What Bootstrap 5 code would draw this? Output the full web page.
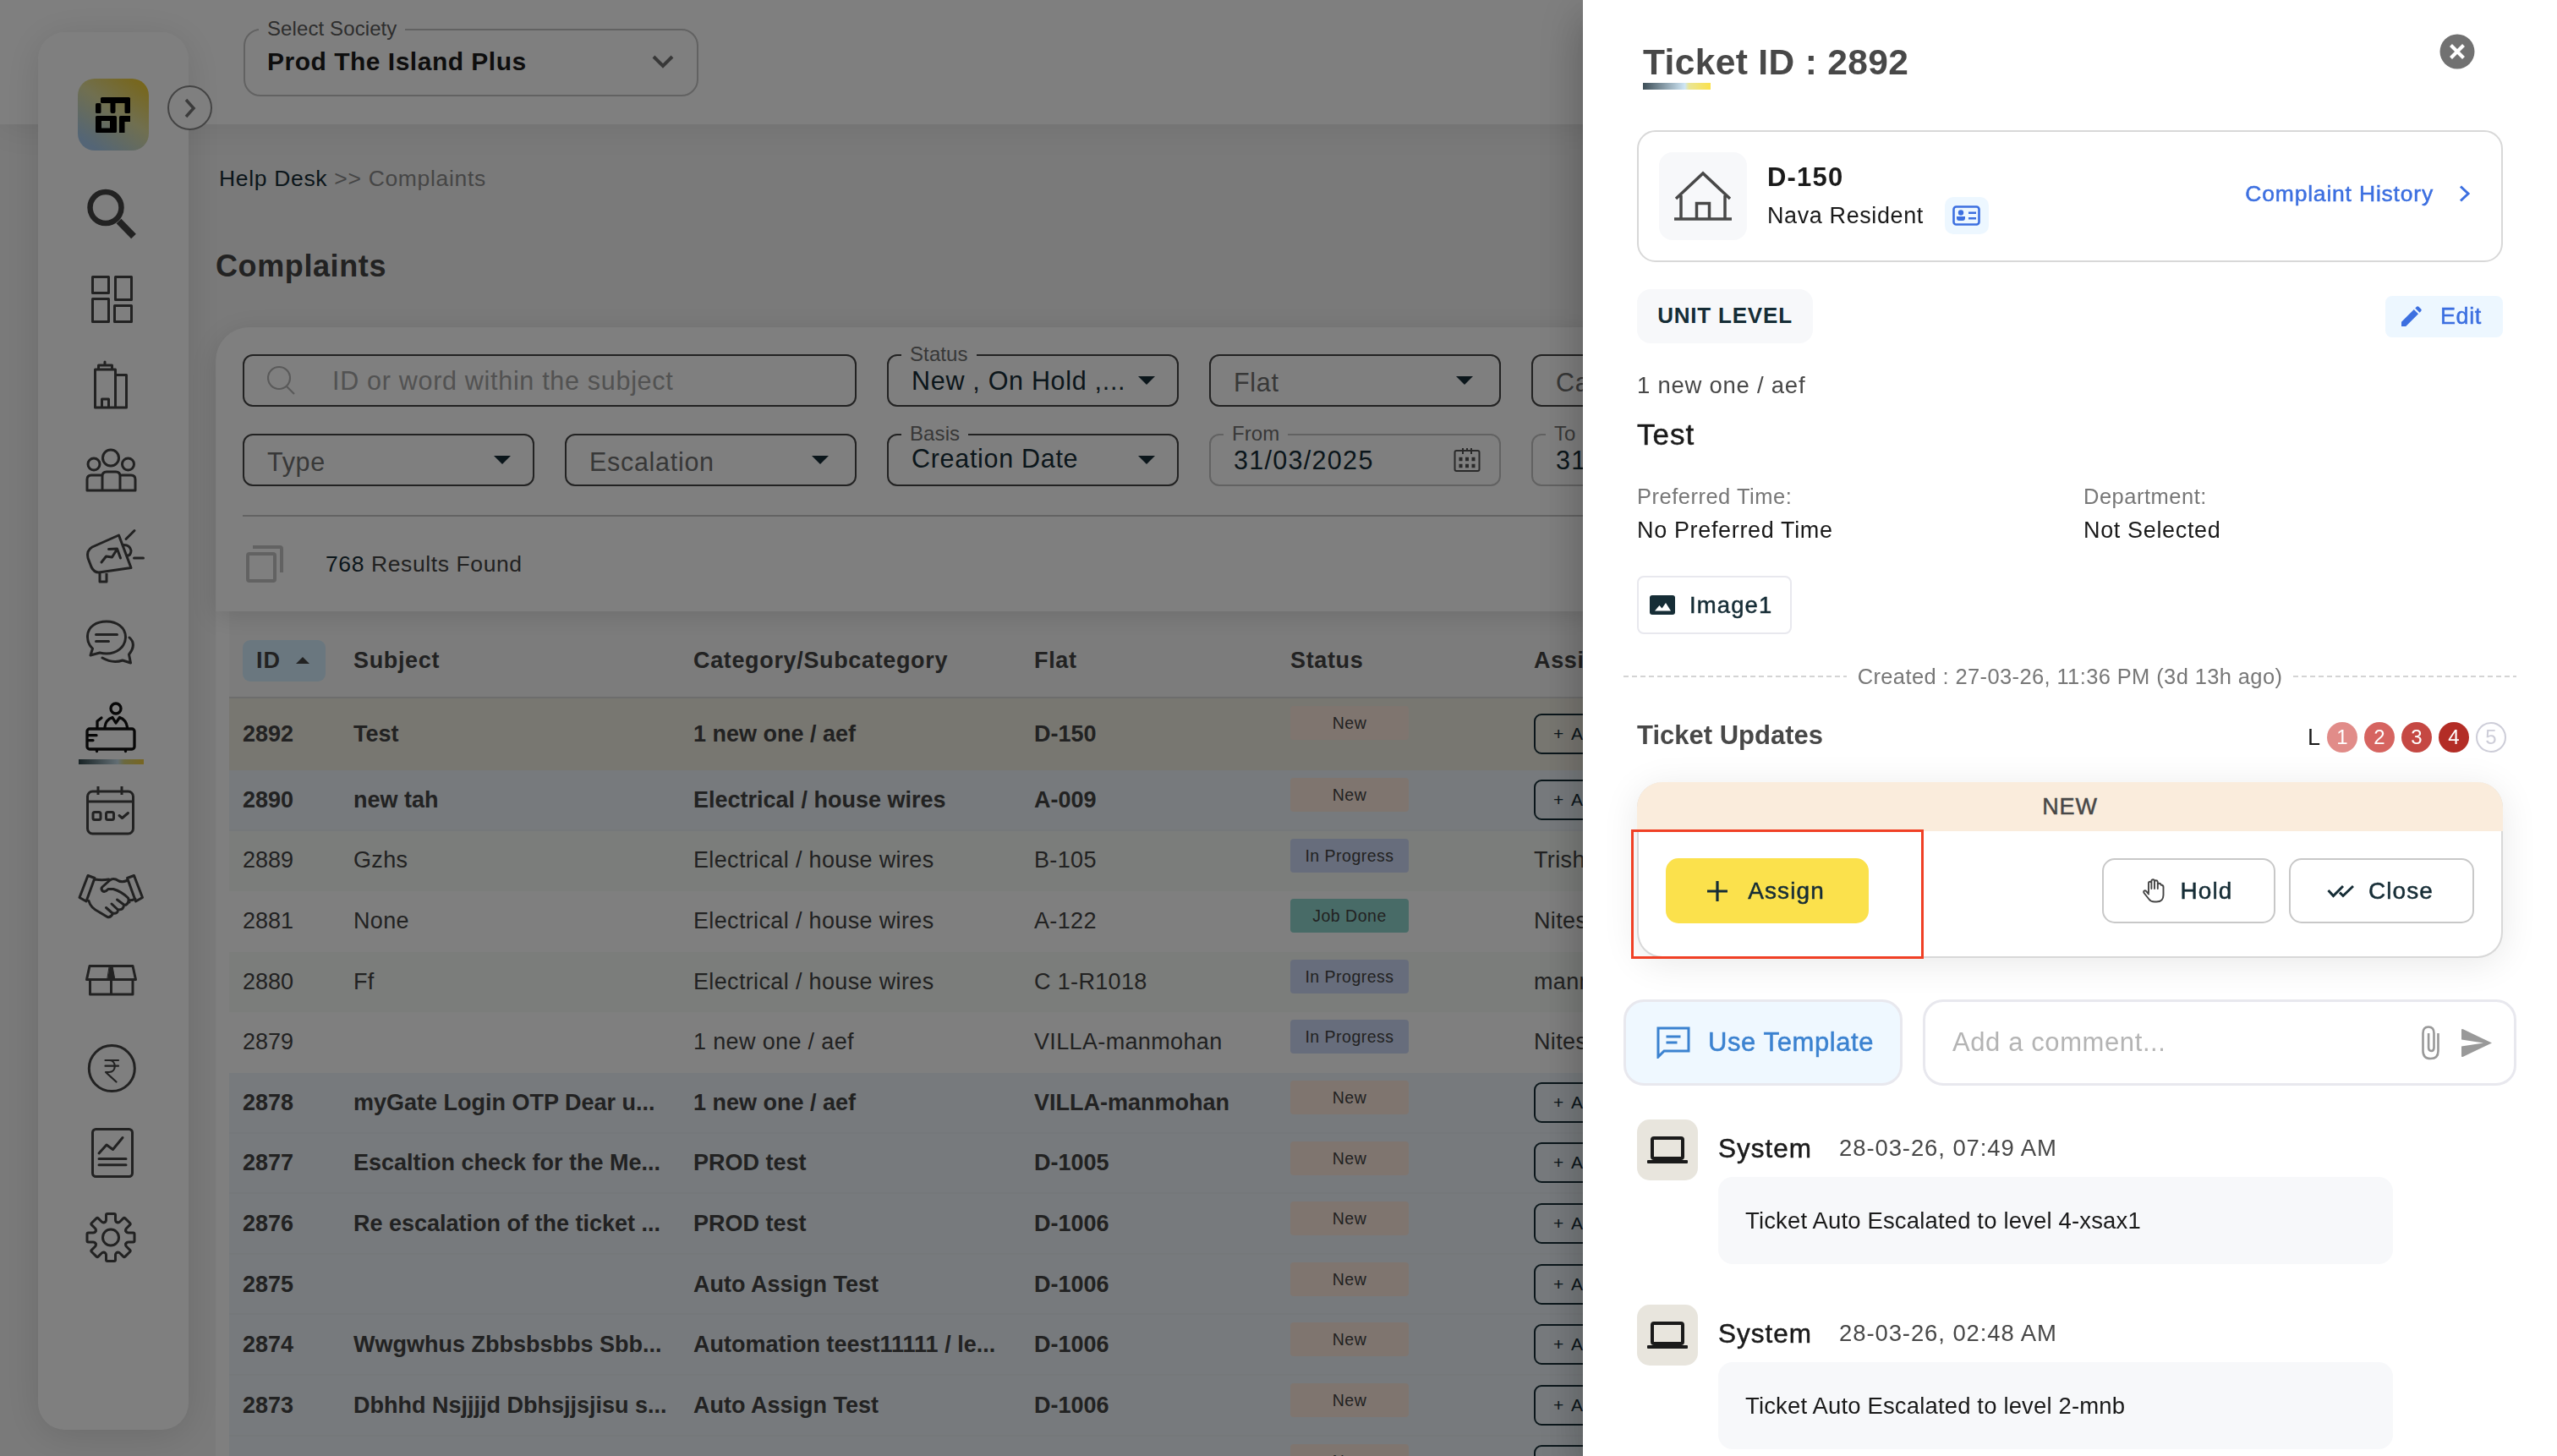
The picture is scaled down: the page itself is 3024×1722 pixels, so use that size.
<!DOCTYPE html>
<html lang="en">
<head>
<meta charset="utf-8">
<title>Help Desk - Complaints</title>
<link href="https://cdn.jsdelivr.net/npm/bootstrap@5.3.0/dist/css/bootstrap.min.css" rel="stylesheet">
<style>
body{font-family:"Liberation Sans",Arial,sans-serif;background:#f4f4f4;color:#444;width:3024px;height:1722px;overflow:hidden;font-size:27px;line-height:36px}
svg{display:block;flex:none}
.ink{color:#162d36}
.topbar{height:147px;background:#fff;box-shadow:0 6px 36px rgba(0,0,0,.07);padding:34px 0 0 288px}
.society{width:538px;height:80px;border:2px solid #c4c4c4;border-radius:20px;padding:0 27px 3px 26px;font-size:30px;letter-spacing:.5px;color:#1c1c1c}
.notch{position:absolute;top:-17px;left:16px;padding:0 10px;background:#fff;font-size:24px;line-height:30px;white-space:nowrap;color:#5c5c5c;font-weight:400;letter-spacing:.1px}
.rail{position:fixed;z-index:20;left:45px;top:38px;width:178px;height:1653px;border-radius:32px;background:#fff;box-shadow:0 6px 46px rgba(0,0,0,.12);padding-top:55px}
.rail .brand{width:84px;height:85px;border-radius:20px;background:linear-gradient(35deg,#a8cbec 12%,#e1dfa0 55%,#f0cc32 95%);margin:0 0 24px 47px}
.rail nav{margin-left:46px;width:80px}
.rail nav svg{width:80px;height:101px;fill:none;stroke:#444;stroke-width:3;stroke-linejoin:round;stroke-linecap:round}
.rail .toggle{position:absolute;left:153px;top:63px;width:53px;height:53px;border:2px solid #888;border-radius:50%;background:#fff}
.page-body{padding-left:255px;width:1884px;overflow:hidden}
.crumb{font-size:26.5px;letter-spacing:.67px;padding:45px 0 0 4px;line-height:38px;color:#8c8c8c}
.page-title{font-size:36px;letter-spacing:.6px;line-height:46px;margin:62px 0 0;font-weight:700;color:#444}
.filters{margin-top:49px;height:336px;background:#fff;border-radius:40px 0 0 0;padding:32px 0 0 32px;box-shadow:0 6px 30px rgba(0,0,0,.12);z-index:2}
.f-row{gap:36px;margin-bottom:32px}
.fld{width:345px;height:62px;border:2px solid #444;border-radius:12px;padding:0 26px 0 27px;font-size:30.5px;letter-spacing:.7px;white-space:nowrap;flex:none;color:#707070}
.fld.wide{width:726px}
.fld.open{padding-right:31px}
.fld.soft{border-color:#c4c4c4;padding-right:22px;letter-spacing:1.3px}
.fld .notch{top:-17px;left:15px;font-size:24px;color:#707070}
.caret{width:0;height:0;border:10px solid transparent;border-top:10px solid #162d36;border-bottom:0}
.sheet{background:#fff;padding-left:16px}
.tbl{table-layout:fixed;width:2700px;margin:0;border-collapse:collapse;--bs-table-bg:transparent;--bs-table-color:#444}
.tbl>:not(caption)>*>*{padding:0 0 2px 16px;border:0;white-space:nowrap;overflow:hidden;color:#444;background:none;box-shadow:none;vertical-align:middle}
.tbl thead tr{height:102px;background:#f9f9f9;border-bottom:2px solid #dadada}
.tbl thead th.hd{padding-top:16px;letter-spacing:.65px}
.tbl tbody tr{height:71.6px;border:0;letter-spacing:.35px}
.tbl tbody td:first-child{letter-spacing:0}
.tbl tr.is-open{height:86px;background:#f1eee3}
.tbl tr.is-new{background:#eef5fa;box-shadow:inset 0 -2px 0 #eaf0f5}
.tbl tr.is-odd{background:#f6faf6}
.tbl tbody tr.is-open,.tbl tbody tr.is-new{font-weight:700;letter-spacing:0}
.tbl td.st{vertical-align:top!important;padding-top:9px!important}
.pill{width:140px;height:40px;border-radius:4px;font-size:19.5px;letter-spacing:.5px;line-height:40px;text-align:center;font-weight:400}
.pill.new{background:#ffeade}.pill.prog{background:#cfdbf8}.pill.done{background:#90d7cf}
.chip{width:98px;height:49px;border-radius:9px;background:#d4efff;padding:0 19px 0 16px;margin-top:17px}
.up{width:0;height:0;border:8px solid transparent;border-bottom:8px solid #444;border-top:0}
.mini{width:130px;height:48px;border:2.5px solid #162d36;border-radius:9px;font-size:21px;letter-spacing:.5px;word-spacing:3px;font-weight:400;color:#162d36;padding-left:21px;line-height:43px}
/* drawer */
.offcanvas.drawer{--bs-offcanvas-width:1152px;width:1152px;border:0;color:#1a1a1a;padding:0 64px;overflow:hidden;box-shadow:0 16px 20px -10px rgba(0,0,0,.2),0 32px 48px 4px rgba(0,0,0,.14),0 12px 54px 8px rgba(0,0,0,.12)}
.drawer>*{flex-shrink:0}
.d-head{height:154px;padding:49px 34px 0 7px}
.d-head h1{font-size:42.5px;letter-spacing:.35px;line-height:49px;color:#484848;font-weight:700;margin:0}
.rule{width:80px;height:8px;background:linear-gradient(90deg,#3d4e57,#cfe6f5 62%,#e9e596 68%,#fbe14c)}
.med{-webkit-text-stroke:.5px currentColor}
.unit{height:156px;border:2px solid #d8d8d8;border-radius:22px;padding:0 36px 0 24px}
.tile{width:104px;height:104px;border-radius:16px;background:#f7f8fa}
.idb{width:52px;height:44px;border-radius:10px;background:#edf7ff}
.lnk{color:#3c6fe0}
.lvl{height:64px;width:208px;border-radius:16px;background:#f7f8fa;color:#162d36;line-height:63px;text-align:center}
.edit{width:139px;height:49px;border-radius:8px;background:#edf7ff;padding-left:18px;gap:21px}
.att{width:183px;height:69px;border:2px solid #e8e8ee;border-radius:8px;font-size:27.5px;padding-left:13px;gap:17px;margin-top:34px}
.created{margin:33px -16px 0;height:34px;gap:13px;font-size:25.5px;letter-spacing:.38px;color:#777;white-space:nowrap}
.created i{flex:1;height:2px;background:repeating-linear-gradient(90deg,#d4d4d4 0 6px,transparent 6px 10px)}
.t-lab{font-size:25.5px;line-height:34px;color:#777;letter-spacing:.5px}
.t-val{margin-top:3px;line-height:40px;letter-spacing:.65px}
.dot{width:36px;height:36px;border-radius:50%;font-size:24px;line-height:36px;text-align:center;color:#fff}
.stat{height:208px;margin-top:34px;border-radius:30px;border:2px solid #d8d8d8;border-top:0;box-shadow:0 6px 44px rgba(0,0,0,.09);background:#fff}
.stat .cap{height:58px;margin:0 -2px;background:#faecdc;border-radius:30px 30px 0 0;line-height:58px;text-align:center;color:#484848;letter-spacing:.8px}
.stat .acts{padding:32px 32px 0}
.act{height:77px;border-radius:15px;border:2px solid #c8c8c8;background:#fff;font-size:28px;color:#162d36;padding:0 3px 0 0;letter-spacing:1.1px}
.act.go{background:#fbe14c;border-color:#fbe14c;width:240px}
.hilite{position:absolute;left:-9px;top:56px;width:346px;height:153px;border:3px solid #f04025}
.compose{margin:49px -16px 0;gap:24px;height:102px}
.compose>div{border:3px solid #e8e8ee;border-radius:24px;font-size:31px;letter-spacing:.6px}
.av{width:72px;height:72px;border-radius:15px;background:#e8e5dd}
.msg{width:798px;height:103px;border-radius:17px;background:#f7f8fa;line-height:103px;padding-left:32px;font-size:27.5px;letter-spacing:.15px}
</style>
<script src="https://cdn.jsdelivr.net/npm/bootstrap@5.3.0/dist/js/bootstrap.bundle.min.js"></script>
</head>
<body>
<header class="topbar">
  <div class="society position-relative d-flex align-items-center justify-content-between fw-bold">
    <span class="notch">Select Society</span><span>Prod The Island Plus</span>
    <svg width="26" height="16" viewBox="0 0 26 16" fill="none" stroke="#707070" stroke-width="4"><path d="M2 2l11 11L24 2"/></svg>
  </div>
</header>

<aside class="rail">
  <div class="brand"><svg width="84" height="85" viewBox="0 0 84 85"><g fill="#000"><rect x="27" y="22" width="35" height="7" rx="1.5"/><rect x="38.500" y="25" width="6" height="16" rx="2"/><rect x="55.500" y="24" width="6.500" height="17" rx="1.500"/><rect x="21" y="29" width="6.500" height="12" rx="1.500"/><path d="M21 45.500q0-1.500 1.500-1.500h22q1.500 0 1.500 1.500v17q0 1.500-1.500 1.500h-22q-1.500 0-1.500-1.500zM28 50v8.500h10v-8.500z" fill-rule="evenodd"/><path d="M49 45.500q0-1.500 1.500-1.500H62v7h-6.500v13H49z"/></g></svg></div>
  <button class="toggle d-flex align-items-center justify-content-center p-0"><svg width="14" height="24" viewBox="0 0 14 24" fill="none" stroke="#777" stroke-width="3.500"><path d="M2 2l9 10-9 10"/></svg></button>
  <nav class="d-flex flex-column">
    <svg viewBox="0 0 80 101"><circle cx="34" cy="43.500" r="18.500" stroke-width="6.500"/><path d="M49.500 59.500L67 77.500" stroke-width="8" stroke-linecap="butt"/></svg>
    <svg viewBox="0 0 80 101"><rect x="18.500" y="24.500" width="19" height="19"/><rect x="45.500" y="24.500" width="19" height="27"/><rect x="18.500" y="50.500" width="19" height="27"/><rect x="44.500" y="58.500" width="20" height="19"/></svg>
    <svg viewBox="0 0 80 101"><path d="M21.500 33h24v45h-24zM25.500 32v-4h16v4M33 28v-4M45.500 39.500h13V78h-13M29.500 78V68h8v10"/></svg>
    <svg viewBox="0 0 80 101"><circle cx="40" cy="36.500" r="9.500"/><circle cx="20" cy="44" r="7"/><circle cx="60.500" cy="44" r="7"/><path d="M30 75V58q0-5 5-5h11q5 0 5 5v17M30 57H17q-5 0-5 5v13h57V62q0-5-5-5H51"/></svg>
    <svg viewBox="0 0 80 101"><path d="M49.500 27L64 65.500 26 71Q20 71 17 64.500L13 54Q11 45 18 41zM27 72v10h8V70.500M29 59l5.500-7 7 1 6-9.500M37.500 43.500l10-.5 4 11M55.500 38.500q7 0 8.500 6.500 0 6-5 6.500M58 31.500L68 21.500M67.500 54h11"/></svg>
    <svg viewBox="0 0 80 101"><path d="M18.500 60Q12 54 12.500 45C13 34 23 28 35 28s22.500 7 22.500 18.500S47 66 35 66q-4 0-8-1l-11 3zM62 47q9 8 -.5 20L63.500 77 54 74q-12 4-24-3M22.500 43.500h25M22.500 51.500h15"/></svg>
    <svg viewBox="0 0 80 101" style="overflow:visible"><defs><linearGradient id="ul"><stop offset="0" stop-color="#30464a"/><stop offset=".6" stop-color="#c5dce8"/><stop offset=".7" stop-color="#d6d27e"/><stop offset="1" stop-color="#f0cc42"/></linearGradient></defs><g stroke="#101010" stroke-width="3.300"><circle cx="46" cy="30" r="6"/><rect x="12" y="54" width="56" height="24" rx="3"/><path d="M33 52q1-9 9-11.500l4 6.500 4.500-6.500Q58 43 59.500 52M24 52v-7l5-4M13 61.700h10M13 67.600h6M23.500 79v1.500M57.500 79v1.500"/></g><rect x="2" y="90" width="77" height="6" fill="url(#ul)" stroke="none"/></svg>
    <svg viewBox="0 0 80 101"><rect x="12.500" y="27" width="54" height="50" rx="6"/><path d="M12.500 39h54M25 21v10M53 21v10" stroke-linecap="butt"/><rect x="19" y="51.500" width="9" height="9" rx="2"/><rect x="34.500" y="51.500" width="9" height="9" rx="2"/><path d="M50 55.500l3.500 3 7-6"/></svg>
    <svg viewBox="0 0 80 101"><path d="M13 25.500l8 3L11 56l-8-4.500zM67.500 25.500l-8 3L69.500 56l8-4.500zM21.500 30q8 1.500 16 0M59 31.500q-7 3-13-1.500-4-1.500-7 1l-9 8q-2 2 0 4.500 3 2.500 7-2h6q10 3 17.500 10.500l1.500 5M14 55.500q2 8 12 13l10 6q4 1 6.500-4l-8-7M42.500 70q6 1 6-4l-7.500-7M49 66q6.500 0 6.500-6l-8-6M55.500 60.500q5 0 5.500-5.500 5 0 8-2"/></svg>
    <svg viewBox="0 0 80 101"><path d="M15 31.500h51l3.500 16h-58zM15.500 48v17h50.500V48M40.500 48v17"/><path d="M38.500 32h3.500l3 16h-9z" fill="#444" stroke-width="1"/></svg>
    <svg viewBox="0 0 80 101"><circle cx="41.300" cy="51.600" r="27"/><path d="M33.500 42H49M33.500 48.700H49M34 42h4c9 0 9 14 0 14h-4l12.500 11.500" stroke-width="2.200"/></svg>
    <svg viewBox="0 0 80 101"><rect x="18.500" y="22.500" width="47" height="56" rx="4"/><path d="M26 51l9-10 7.500 5.500L54 32.500M26 57.500h32M26 64.700h32"/></svg>
    <svg viewBox="0 0 80 101"><defs><path id="cog" d="M-7.500-17.800Q-5.500-18.500-5.500-21V-26.500Q-5.500-28-4-28H4Q5.500-28 5.500-26.500V-21Q5.500-18.500 7.500-17.800"/></defs><g transform="translate(40 49.500)"><circle r="9.500"/><use href="#cog"/><use href="#cog" transform="rotate(45)"/><use href="#cog" transform="rotate(90)"/><use href="#cog" transform="rotate(135)"/><use href="#cog" transform="rotate(180)"/><use href="#cog" transform="rotate(225)"/><use href="#cog" transform="rotate(270)"/><use href="#cog" transform="rotate(315)"/></g></svg>
  </nav>
</aside>

<main class="page-body">
  <div class="crumb"><span class="ink">Help Desk</span> &gt;&gt; Complaints</div>
  <h2 class="page-title">Complaints</h2>
  <section class="filters position-relative">
    <div class="f-row d-flex">
      <div class="fld wide d-flex align-items-center" style="color:#a4a4a4"><svg width="36" height="36" viewBox="0 0 36 36" fill="none" stroke="#b4b4b4" stroke-width="2.200"><circle cx="14" cy="15" r="13"/><path d="M23 25l9 9"/></svg><span style="margin-left:41px">ID or word within the subject</span></div>
      <div class="fld position-relative d-flex align-items-center justify-content-between"><span class="notch">Status</span><span class="ink">New , On Hold ,...</span><i class="caret"></i></div>
      <div class="fld open d-flex align-items-center justify-content-between"><span class="pt-1">Flat</span><i class="caret"></i></div>
      <div class="fld d-flex align-items-center justify-content-between"><span class="pt-1">Category</span></div>
    </div>
    <div class="f-row d-flex">
      <div class="fld d-flex align-items-center justify-content-between"><span class="pt-1">Type</span><i class="caret"></i></div>
      <div class="fld open d-flex align-items-center justify-content-between"><span class="pt-1">Escalation</span><i class="caret"></i></div>
      <div class="fld position-relative d-flex align-items-center justify-content-between"><span class="notch">Basis</span><span class="ink pb-1">Creation Date</span><i class="caret"></i></div>
      <div class="fld soft position-relative d-flex align-items-center justify-content-between"><span class="notch">From</span><span class="ink">31/03/2025</span><svg width="32" height="30" viewBox="0 0 32 30" fill="none" stroke="#555" stroke-width="2"><rect x="1.500" y="4" width="29" height="24" rx="2"/><path d="M11 1v7M16 1v4M21 1v7"/><path d="M6.500 14h19M6.500 22h19" stroke-width="4.500" stroke-dasharray="4 3.500"/></svg></div>
      <div class="fld soft position-relative d-flex align-items-center"><span class="notch">To</span><span class="ink">31/03/2026</span></div>
    </div>
    <div style="height:2px;background:#c6c6c6;margin-top:34px"></div>
    <div class="d-flex align-items-center" style="height:112px;padding-left:4px">
      <svg width="44" height="44" viewBox="0 0 44 44" fill="none" stroke="#c4c4c4" stroke-width="4"><rect x="2" y="10" width="32" height="32" rx="2"/><path d="M8 2h32q2 0 2 2v28"/></svg>
      <span style="margin-left:50px;font-size:26.500px;letter-spacing:.6px"><span class="ink">768</span> Results Found</span>
    </div>
  </section>
  <section class="sheet">
    <table class="table tbl">
      <colgroup><col style="width:131px"><col style="width:402px"><col style="width:403px"><col style="width:303px"><col style="width:288px"><col></colgroup>
      <thead><tr><th><div class="chip d-flex align-items-center justify-content-between" style="letter-spacing:1px">ID<i class="up"></i></div></th><th class="hd">Subject</th><th class="hd">Category/Subcategory</th><th class="hd">Flat</th><th class="hd">Status</th><th class="hd">Assigned To</th></tr></thead>
      <tbody id="rows"></tbody>
    </table>
  </section>
</main>

<div class="offcanvas-backdrop show"></div>

<div class="offcanvas offcanvas-end show drawer" tabindex="-1" data-bs-backdrop="false" data-bs-scroll="true">
  <div class="d-head d-flex justify-content-between">
    <div><h1>Ticket ID : 2892</h1><div class="rule"></div></div>
    <svg width="42" height="42" viewBox="0 0 42 42" style="margin-top:-9px;margin-right:-1px"><circle cx="21" cy="21" r="20.500" fill="#717171"/><path d="M13.500 13.500l15 15M28.500 13.500l-15 15" stroke="#fff" stroke-width="4.200"/></svg>
  </div>

  <div class="unit d-flex align-items-center">
    <div class="tile d-flex align-items-center justify-content-center"><svg width="70" height="60" viewBox="0 0 70 60" fill="none" stroke="#484848" stroke-width="3.500"><path d="M3 33L35 3l32 30M9 29v28M61 29v28M1 57h68M27.500 56V38.500h15V56"/></svg></div>
    <div style="margin-left:24px">
      <div class="fw-bold" style="font-size:31px;line-height:46px;letter-spacing:1.200px">D-150</div>
      <div class="d-flex align-items-center"><span style="font-size:27px;letter-spacing:.6px">Nava Resident</span>
      <div class="idb d-flex align-items-center justify-content-center" style="margin-left:25px"><svg width="33" height="24" viewBox="0 0 33 24"><rect x="1.500" y="1.500" width="30" height="21" rx="3" fill="none" stroke="#3c6fe0" stroke-width="2.600"/><circle cx="10" cy="8.500" r="3.200" fill="#3c6fe0"/><path d="M5 13h10v2q0 3-3 3H8q-3 0-3-3zM19 7.500h9v2.500h-9zM19 14h9v2.500h-9z" fill="#3c6fe0"/></svg></div></div>
    </div>
    <div class="lnk med ms-auto d-flex align-items-center" style="font-size:26.500px;letter-spacing:.8px;margin-top:-6px"><span>Complaint History</span><svg style="margin-left:30px" width="14" height="20" viewBox="0 0 14 20" fill="none" stroke="#3c6fe0" stroke-width="3"><path d="M2 1.500L11 10l-9 8.500"/></svg></div>
  </div>

  <div class="d-flex align-items-center justify-content-between" style="margin-top:32px">
    <div class="lvl fw-bold" style="font-size:26px;letter-spacing:.8px">UNIT LEVEL</div>
    <div class="edit lnk med d-flex align-items-center"><svg width="26" height="25" viewBox="0 0 26 25" fill="#3c6fe0"><path d="M1 24v-5.200L15.800 4 21 9.200 6.200 24zM17.300 2.500l1.700-1.700q1.200-1 2.400 0l2.800 2.800q1 1.200 0 2.400l-1.700 1.700z"/></svg><span style="letter-spacing:.6px">Edit</span></div>
  </div>
  <div style="margin-top:32px;line-height:36px;font-size:27.500px;letter-spacing:.75px;color:#484848">1 new one / aef</div>
  <div class="med" style="margin-top:18px;line-height:44px;font-size:35px;letter-spacing:1px">Test</div>
  <div class="d-flex" style="margin-top:34px">
    <div style="width:528px"><div class="t-lab">Preferred Time:</div><div class="t-val">No Preferred Time</div></div>
    <div><div class="t-lab">Department:</div><div class="t-val">Not Selected</div></div>
  </div>
  <div class="att ink med d-flex align-items-center"><svg width="30" height="23" viewBox="0 0 30 23"><rect width="30" height="23" rx="3" fill="#162d36"/><path d="M6 18.500l5.500-6.500 3 3.500L19 9l6 9.500z" fill="#fff"/></svg><span style="letter-spacing:1.100px">Image1</span></div>
  <div class="created d-flex align-items-center"><i></i><span>Created : 27-03-26, 11:36 PM (3d 13h ago)</span><i></i></div>
  <div class="d-flex justify-content-between" style="margin-top:30px;height:44px;margin-right:-4px">
    <span class="fw-bold" style="font-size:31px;line-height:45px;color:#484848">Ticket Updates</span>
    <div class="d-flex" style="gap:8px;margin-top:7px"><span>L</span>
      <span class="dot" style="background:#e18c89">1</span><span class="dot" style="background:#d66460">2</span><span class="dot" style="background:#c54843">3</span><span class="dot" style="background:#b32d26">4</span><span class="dot" style="border:2px solid #cdcdd8;color:#cdcdd8;line-height:32px">5</span></div>
  </div>
  <div class="stat position-relative">
    <div class="cap med">NEW</div>
    <div class="acts d-flex">
      <button class="act go med d-flex align-items-center justify-content-center me-auto"><svg width="24" height="24" viewBox="0 0 24 24" stroke="#162d36" stroke-width="3.200" style="margin-right:24px"><path d="M12 0v24M0 12h24"/></svg>Assign</button>
      <button class="act med d-flex align-items-center justify-content-center" style="width:205px;margin-right:16px"><svg width="26" height="29" viewBox="0 0 26 29" fill="none" stroke="#444" stroke-width="1.900" stroke-linecap="round" stroke-linejoin="round" style="margin-right:19px"><path d="M7 17V5.500q0-1.700 1.700-1.700t1.700 1.700V12V3q0-1.800 1.800-1.800T14 3v9V4q0-1.700 1.700-1.700T17.800 4v8V7.500q0-1.700 1.800-1.700t1.900 1.700q3 .2 3 2.500V19.500q0 8-8 8H14q-4.500 0-6.500-3L1.500 17q-.8-2 .7-2.600 1.500-.4 2.300 1L7 18.500"/></svg>Hold</button>
      <button class="act med d-flex align-items-center justify-content-center" style="width:219px"><svg width="32" height="16" viewBox="0 0 32 16" fill="none" stroke="#162d36" stroke-width="3" style="margin-right:17px"><path d="M1.500 7l6 6.500L19 2M15 9.500l4 4L31 2"/></svg>Close</button>
    </div>
    <div class="hilite"></div>
  </div>
  <div class="compose d-flex">
    <div class="d-flex align-items-center med" style="width:330px;background:#eff8ff;color:#3b82d0;padding-left:36px"><svg width="40" height="38" viewBox="0 0 40 38" fill="none" stroke="#3b82d0" stroke-width="3" style="margin-right:21px"><path d="M2 36V2h36v27H9zM11.500 12h17M11.500 19h13"/></svg><span class="text-nowrap">Use Template</span></div>
    <div class="d-flex align-items-center flex-grow-1" style="padding:0 25px 0 32px;color:#b4b4b4"><span class="me-auto">Add a comment...</span>
      <svg width="21" height="41" viewBox="0 0 21 41" fill="none" stroke="#999" stroke-width="2.600" style="margin-right:25px"><path d="M19.500 9v21q0 9-9 9t-9-9V9q0-7.500 6.500-7.500T14.500 9v17q0 4-3.200 4t-3.200-4V9"/></svg>
      <svg width="38" height="33" viewBox="0 0 38 33" fill="#999"><path d="M1 1q0-1.500 2-.7L37 16.500 3 32.700q-2 .8-2-.7V20.500l26-4-26-4z"/></svg></div>
  </div>
  <div id="log" style="margin-top:40px"></div>
</div>

<script>
const rows=[
["2892","Test","1 new one / aef","D-150","New",""],
["2890","new tah","Electrical / house wires","A-009","New",""],
["2889","Gzhs","Electrical / house wires","B-105","In Progress","Trisha"],
["2881","None","Electrical / house wires","A-122","Job Done","Nitesh"],
["2880","Ff","Electrical / house wires","C 1-R1018","In Progress","manmohan"],
["2879","","1 new one / aef","VILLA-manmohan","In Progress","Nitesh"],
["2878","myGate Login OTP Dear u...","1 new one / aef","VILLA-manmohan","New",""],
["2877","Escaltion check for the Me...","PROD test","D-1005","New",""],
["2876","Re escalation of the ticket ...","PROD test","D-1006","New",""],
["2875","","Auto Assign Test","D-1006","New",""],
["2874","Wwgwhus Zbbsbsbbs Sbb...","Automation teest11111 / le...","D-1006","New",""],
["2873","Dbhhd Nsjjjjd Dbhsjjsjisu s...","Auto Assign Test","D-1006","New",""],
["","","","","New",""]];
const pill={"New":"new","In Progress":"prog","Job Done":"done"};
document.getElementById("rows").innerHTML=rows.map((r,i)=>{
  const c=i===0?"is-open":r[4]==="New"?"is-new":i%2===0?"is-odd":"";
  return `<tr class="${c}"><td>${r[0]}</td><td>${r[1]}</td><td>${r[2]}</td><td>${r[3]}</td><td class="st"><div class="pill ${pill[r[4]]}">${r[4]}</div></td><td>${r[5]||'<div class="mini">+ Assign</div>'}</td></tr>`}).join("");
document.getElementById("log").innerHTML=[["28-03-26, 07:49 AM","Ticket Auto Escalated to level 4-xsax1"],["28-03-26, 02:48 AM","Ticket Auto Escalated to level 2-mnb"]].map(m=>
`<div class="d-flex" style="gap:24px;margin-bottom:48px"><div class="av d-flex align-items-center justify-content-center"><svg width="48" height="32" viewBox="0 0 48 32"><rect x="6" y="2" width="36" height="24" rx="2" fill="none" stroke="#1a1a1a" stroke-width="4"/><rect y="28" width="48" height="4" rx="1" fill="#1a1a1a"/></svg></div>
<div><div class="d-flex align-items-center" style="height:67px;margin-bottom:1px"><span class="med" style="font-size:31.500px;letter-spacing:1px">System</span><span style="font-size:27.500px;letter-spacing:.9px;margin-left:32px;color:#484848">${m[0]}</span></div><div class="msg">${m[1]}</div></div></div>`).join("");
</script>
</body>
</html>
